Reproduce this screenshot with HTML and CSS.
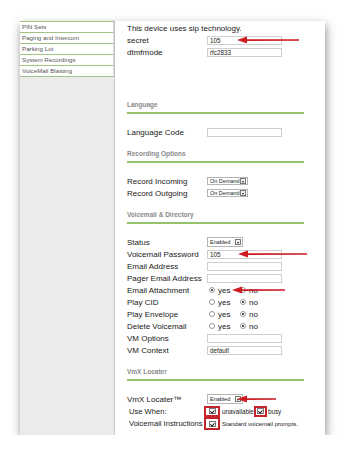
FILE: index.html
```html
<!DOCTYPE html>
<html lang="en">
<head>
  <meta charset="UTF-8">
  <meta name="viewport" content="width=device-width, initial-scale=1.0">
  <title>Extension - Voicemail</title>
  <link rel="stylesheet" href="styles.css">
</head>
<body>
  <div class="page">
    <aside class="sidebar">
      <ul class="nav">
        <li>PIN Sets</li>
        <li>Paging and Intercom</li>
        <li>Parking Lot</li>
        <li>System Recordings</li>
        <li>VoiceMail Blasting</li>
      </ul>
    </aside>

    <main class="content">
      <p class="row">This device uses sip technology.</p>
      <div class="row">
        <span class="label">secret</span>
        <span class="input">105</span>
        <svg class="arrow arrow-secret" width="62" height="8"><path d="M0 4 L10 0.5 L10 7.5 Z M9 3 L62 3.3 L62 4.7 L9 5 Z"/></svg>
      </div>
      <div class="row">
        <span class="label">dtmfmode</span>
        <span class="input">rfc2833</span>
      </div>

      <!-- Language -->
      <h3 class="section-title first">Language</h3>
      <div class="row">
        <span class="label">Language Code</span>
        <span class="input"></span>
      </div>

      <!-- Recording Options -->
      <h3 class="section-title">Recording Options</h3>
      <div class="row">
        <span class="label">Record Incoming</span>
        <span class="select wide">On Demand<i class="select-btn"></i></span>
      </div>
      <div class="row">
        <span class="label">Record Outgoing</span>
        <span class="select wide">On Demand<i class="select-btn"></i></span>
      </div>

      <!-- Voicemail & Directory -->
      <h3 class="section-title">Voicemail &amp; Directory</h3>
      <div class="row">
        <span class="label">Status</span>
        <span class="select tall">Enabled<i class="select-btn"></i></span>
      </div>
      <div class="row">
        <span class="label">Voicemail Password</span>
        <span class="input">105</span>
        <svg class="arrow arrow-password" width="69" height="8"><path d="M0 4 L10 0.5 L10 7.5 Z M9 3 L69 3.3 L69 4.7 L9 5 Z"/></svg>
      </div>
      <div class="row">
        <span class="label">Email Address</span>
        <span class="input"></span>
      </div>
      <div class="row">
        <span class="label">Pager Email Address</span>
        <span class="input"></span>
      </div>
      <div class="row">
        <span class="label">Email Attachment</span>
        <span class="choice"><i class="radio checked"></i>yes</span>
        <span class="choice"><i class="radio"></i>no</span>
        <svg class="arrow arrow-attach" width="53" height="8"><path d="M0 4 L10 0.5 L10 7.5 Z M9 3 L53 3.3 L53 4.7 L9 5 Z"/></svg>
      </div>
      <div class="row">
        <span class="label">Play CID</span>
        <span class="choice"><i class="radio"></i>yes</span>
        <span class="choice"><i class="radio checked"></i>no</span>
      </div>
      <div class="row">
        <span class="label">Play Envelope</span>
        <span class="choice"><i class="radio"></i>yes</span>
        <span class="choice"><i class="radio checked"></i>no</span>
      </div>
      <div class="row">
        <span class="label">Delete Voicemail</span>
        <span class="choice"><i class="radio"></i>yes</span>
        <span class="choice"><i class="radio checked"></i>no</span>
      </div>
      <div class="row">
        <span class="label">VM Options</span>
        <span class="input"></span>
      </div>
      <div class="row">
        <span class="label">VM Context</span>
        <span class="input">default</span>
      </div>

      <!-- VmX Locater -->
      <h3 class="section-title">VmX Locater</h3>
      <div class="row">
        <span class="label">VmX Locater&trade;</span>
        <span class="select tall">Enabled<i class="select-btn"></i></span>
        <svg class="arrow arrow-vmx" width="39" height="8"><path d="M0 4 L10 0.5 L10 7.5 Z M9 3 L39 3.3 L39 4.7 L9 5 Z"/></svg>
      </div>
      <div class="row">
        <span class="label indent">Use When:</span>
        <span class="mark first-mark"><i class="check"></i></span>
        <span class="small">unavailable</span>
        <span class="mark narrow"><i class="check"></i></span>
        <span class="small">busy</span>
      </div>
      <div class="row last">
        <span class="label indent">Voicemail Instructions</span>
        <span class="mark first-mark"><i class="check"></i></span>
        <span class="small tiny">Standard voicemail prompts.</span>
      </div>
    </main>
  </div>
</body>
</html>
```

FILE: styles.css
```css
/* Base */
* {
  margin: 0;
  padding: 0;
  box-sizing: border-box;
}

body {
  font-family: "Liberation Sans", Arial, sans-serif;
  background: #fff;
  color: #1a1a1a;
  padding: 21px 0 0 20px;
}

/* Page frame */
.page {
  display: flex;
  width: 305px;
  height: 414px;
  background: #fff;
  box-shadow: 1px 4px 9px rgba(0, 0, 0, 0.45);
}

/* Left menu */
.sidebar {
  width: 95px;
  background: #ebebeb;
  border-right: 1px solid #c4c4c4;
}

.nav {
  list-style: none;
  border-top: 1px solid #a3c384;
}

.nav li {
  height: 11px;
  line-height: 10px;
  padding-left: 2px;
  font-size: 6.2px;
  color: #555;
  background: #fff;
  border-bottom: 1px solid #a3c384;
  border-right: 1px solid #d6d6d6;
}

/* Main form */
.content {
  flex: 1;
  padding: 1px 21px 0 12px;
}

.row {
  position: relative;
  display: flex;
  align-items: center;
  height: 12px;
  font-size: 8px;
  white-space: nowrap;
}

.row.last {
  height: 13px;
}

.label {
  width: 80px;
  flex-shrink: 0;
}

.label.indent {
  padding-left: 2px;
  font-size: 7.6px;
}

/* Section headings */
.section-title {
  margin: 11px 0 12px;
  height: 14px;
  line-height: 10px;
  padding-bottom: 2px;
  font-size: 6.5px;
  font-weight: bold;
  color: #8a8a8a;
  border-bottom: 2px solid #93c36c;
}

.section-title.first {
  margin-top: 42px;
}

/* Fields */
.input {
  width: 75px;
  height: 9px;
  line-height: 7px;
  padding-left: 2px;
  font-size: 6.3px;
  color: #222;
  border: 1px solid #cfcfcf;
}

.select {
  display: flex;
  align-items: center;
  justify-content: space-between;
  width: 36px;
  height: 8px;
  padding: 0 1px 0 2px;
  font-size: 5.5px;
  color: #222;
  border: 1px solid #b5b5b5;
  overflow: hidden;
}

.select.wide {
  width: 41px;
}

.select.tall {
  height: 10px;
}

.select-btn {
  position: relative;
  flex-shrink: 0;
  width: 6px;
  height: 6px;
  background: #f2f2f2;
  border: 1px solid #777;
}

.select-btn::after {
  content: "";
  position: absolute;
  left: 0.5px;
  top: 1.5px;
  border-left: 1.5px solid transparent;
  border-right: 1.5px solid transparent;
  border-top: 2px solid #222;
}

/* Radios */
.choice {
  display: flex;
  align-items: center;
  width: 31px;
}

.radio {
  position: relative;
  width: 6px;
  height: 6px;
  margin: 0 3px 0 2px;
  border: 1px solid #9a9a9a;
  border-radius: 50%;
  background: #fff;
}

.radio.checked::after {
  content: "";
  position: absolute;
  left: 1px;
  top: 1px;
  width: 2px;
  height: 2px;
  border-radius: 50%;
  background: #222;
}

/* Checkboxes, marked in red */
.mark {
  display: flex;
  align-items: center;
  justify-content: center;
  width: 16px;
  height: 11px;
  border: 2px solid #c4242a;
}

.mark.first-mark {
  margin-left: -3px;
  margin-right: 2px;
}

.row.last .mark {
  height: 13px;
}

.mark.narrow {
  width: 13px;
  margin-right: 1px;
}

.check {
  position: relative;
  width: 7px;
  height: 6px;
  background: #fff;
  border: 1px solid #777;
}

.check::after {
  content: "";
  position: absolute;
  left: 1.5px;
  top: 0;
  width: 1.5px;
  height: 3px;
  border-right: 1px solid #111;
  border-bottom: 1px solid #111;
  transform: rotate(40deg);
}

.small {
  font-size: 6.3px;
  color: #222;
}

.small.tiny {
  font-size: 6px;
}

/* Annotation arrows */
.arrow {
  position: absolute;
  top: 2px;
  fill: #cc1b21;
}

.arrow-secret {
  left: 110px;
}

.arrow-password {
  left: 111px;
}

.arrow-attach {
  left: 105px;
}

.arrow-vmx {
  left: 110px;
}
```
